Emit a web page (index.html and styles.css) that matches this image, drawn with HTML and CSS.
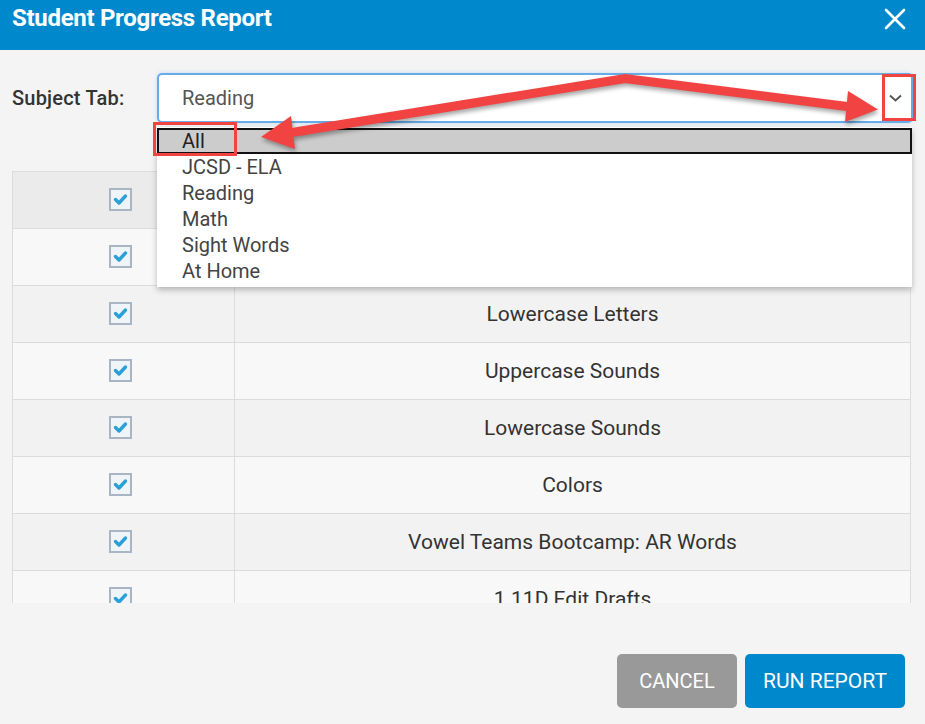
FILE: index.html
```html
<!DOCTYPE html>
<html lang="en">
<head>
  <meta charset="UTF-8">
  <title>Student Progress Report</title>
  <link rel="stylesheet" href="styles.css">
</head>
<body>
  <div class="modal">
    <header class="modal-header">
      <h1 class="modal-title">Student Progress Report</h1>
      <button class="close-btn" aria-label="Close">
        <svg width="22" height="22" viewBox="0 0 22 22"><path d="M2 2 L20 20 M20 2 L2 20" stroke="#fff" stroke-width="2.6" stroke-linecap="round"/></svg>
      </button>
    </header>

    <div class="modal-body">
      <div class="field">
        <label class="field-label">Subject Tab:</label>
        <div class="select-wrap">
          <div class="select-box">
            <span class="select-value">Reading</span>
            <svg class="chevron" width="13" height="8" viewBox="0 0 13 8"><path d="M1 1.5 L6.5 6.5 L12 1.5" stroke="#555" stroke-width="1.9" fill="none"/></svg>
          </div>
          <ul class="select-menu">
            <li class="is-active">All</li>
            <li>JCSD - ELA</li>
            <li>Reading</li>
            <li>Math</li>
            <li>Sight Words</li>
            <li>At Home</li>
          </ul>
        </div>
      </div>

      <div class="table-scroll">
        <table class="skills">
          <tr class="head-row"><td class="check-cell"><span class="check"></span></td><td>Skill</td></tr>
          <tr><td class="check-cell"><span class="check"></span></td><td>Uppercase Letters</td></tr>
          <tr><td class="check-cell"><span class="check"></span></td><td>Lowercase Letters</td></tr>
          <tr><td class="check-cell"><span class="check"></span></td><td>Uppercase Sounds</td></tr>
          <tr><td class="check-cell"><span class="check"></span></td><td>Lowercase Sounds</td></tr>
          <tr><td class="check-cell"><span class="check"></span></td><td>Colors</td></tr>
          <tr><td class="check-cell"><span class="check"></span></td><td>Vowel Teams Bootcamp: AR Words</td></tr>
          <tr><td class="check-cell"><span class="check"></span></td><td>1.11D Edit Drafts</td></tr>
        </table>
      </div>
    </div>

    <footer class="modal-footer">
      <button class="btn btn-cancel">CANCEL</button>
      <button class="btn btn-run">RUN REPORT</button>
    </footer>

    <!-- red callouts drawn on top of the screenshot -->
    <svg class="annotations" width="925" height="724" viewBox="0 0 925 724">
      <g class="arrows">
        <polyline points="292,132.5 625,78.5 847,106.5" fill="none" stroke="#f24343" stroke-width="9" stroke-linejoin="miter"/>
        <polygon points="261,137 291,116 295,149" fill="#f24343"/>
        <polygon points="878,109.5 848,91 845,122" fill="#f24343"/>
      </g>
      <rect x="154.5" y="123.5" width="81" height="31" fill="none" stroke="#f24343" stroke-width="3"/>
      <rect x="883.5" y="75.5" width="31" height="44" fill="none" stroke="#f24343" stroke-width="3"/>
    </svg>
  </div>
</body>
</html>
```

FILE: styles.css
```css
html, body {
  margin: 0;
  padding: 0;
  background: #f4f4f4;
}

body {
  font-family: Roboto, "Liberation Sans", sans-serif;
  color: #333;
}

.modal {
  position: relative;
  width: 925px;
  height: 724px;
  display: flex;
  flex-direction: column;
  overflow: hidden;
}

.modal-header {
  height: 50px;
  box-sizing: border-box;
  padding: 4px 19px 0 12px;
  background: #0088cc;
  display: flex;
  justify-content: space-between;
  align-items: flex-start;
}

.modal-title {
  margin: 0;
  font-size: 24px;
  line-height: 28px;
  font-weight: 700;
  color: #fff;
  letter-spacing: -0.3px;
}

.close-btn {
  border: 0;
  background: none;
  padding: 0;
  margin-top: 4px;
  width: 22px;
  height: 22px;
}

.modal-body {
  padding: 23px 12px 0;
}

.field {
  display: flex;
  align-items: center;
  height: 50px;
  margin-bottom: 48px;
}

.field-label {
  width: 145px;
  flex: none;
  font-size: 20px;
  font-weight: 500;
  letter-spacing: 0.2px;
  color: #333;
}

.select-wrap {
  position: relative;
  flex: 1;
}

.select-box {
  height: 50px;
  box-sizing: border-box;
  border: 2px solid #68abe6;
  border-radius: 5px;
  background: #fff;
  box-shadow: 0 0 4px rgba(104, 171, 230, 0.35);
  display: flex;
  align-items: center;
  justify-content: space-between;
  padding: 0 9px 0 23px;
}

.select-value {
  font-size: 20px;
  color: #555;
}

.select-menu {
  position: absolute;
  top: 54px;
  left: 0;
  right: 1px;
  margin: 0;
  padding: 1px 0 3px;
  list-style: none;
  background: #fff;
  box-shadow: 0 3px 6px rgba(0, 0, 0, 0.25);
  z-index: 2;
}

.select-menu li {
  height: 26px;
  line-height: 26px;
  padding-left: 25px;
  font-size: 20px;
  color: #444;
}

.select-menu li.is-active {
  background: #cccccc;
  border: 2px solid #111;
  line-height: 22px;
  height: 22px;
  padding-left: 23px;
  color: #222;
}

.table-scroll {
  height: 432px;
  margin-right: 2px;
  overflow: hidden;
}

.skills {
  width: 100%;
  border-collapse: collapse;
  border-left: 1px solid #dcdcdc;
  border-right: 1px solid #dcdcdc;
}

.skills td {
  height: 56px;
  padding: 0;
  border-top: 1px solid #dcdcdc;
  border-bottom: 1px solid #dcdcdc;
  text-align: center;
  font-size: 21px;
  color: #333;
}

.skills tr:nth-child(odd) td { background: #f2f2f2; }
.skills tr:nth-child(even) td { background: #f8f8f8; }
.skills tr.head-row td { background: #ebebeb; }

.skills .check-cell {
  width: 215px;
  padding-right: 6px;
  border-right: 1px solid #dcdcdc;
}

.check {
  display: inline-block;
  width: 19px;
  height: 19px;
  border: 2px solid #a9b5c2;
  background: #eff4f9 url("data:image/svg+xml;utf8,<svg xmlns='http://www.w3.org/2000/svg' width='19' height='19' viewBox='0 0 19 19'><path d='M4.5 9.5 L8 13 L14.5 6' stroke='%232b9fd7' stroke-width='3.4' fill='none' stroke-linecap='round' stroke-linejoin='round'/></svg>") no-repeat center;
  vertical-align: middle;
  position: relative;
  top: -1px;
}

.modal-footer {
  display: flex;
  justify-content: flex-end;
  gap: 8px;
  padding: 51px 20px 0 0;
}

.btn {
  height: 54px;
  border: 0;
  border-radius: 5px;
  color: #fff;
  font-family: Roboto, "Liberation Sans", sans-serif;
  font-size: 20px;
  padding: 0;
}

.btn-cancel {
  width: 120px;
  background: #999;
}

.btn-run {
  width: 160px;
  background: #0088cc;
  font-size: 21px;
}

.annotations {
  position: absolute;
  top: 0;
  left: 0;
  pointer-events: none;
  z-index: 5;
}

.arrows {
  filter: drop-shadow(1px 3px 2px rgba(0, 0, 0, 0.35));
}
```
